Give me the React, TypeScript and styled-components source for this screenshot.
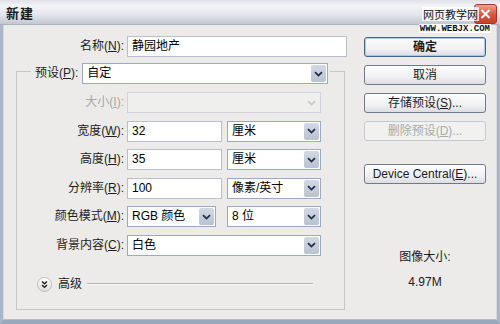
import React from "react"
import styled, { createGlobalStyle } from "styled-components"

const GlobalStyle = createGlobalStyle`
  html, body {
    margin: 0;
    padding: 0;
    background: #ecebe9;
  }
  body {
    font-family: "Liberation Sans", "Noto Sans CJK SC", sans-serif;
    font-size: 12px;
    color: #1c1c1c;
  }
`

const Window = styled.div`
  width: 500px;
  height: 324px;
  display: flex;
  flex-direction: column;
  background: #ecebe9;
  overflow: hidden;
`

const TitleBar = styled.div`
  position: relative;
  height: 25px;
  flex: none;
  display: flex;
  align-items: center;
  padding-left: 6px;
  box-sizing: border-box;
  background: linear-gradient(#dfe1e7 0%, #f4f4f7 25%, #e4e6ec 60%, #c3c7d3 100%);
  border-bottom: 1px solid #a9b1c2;
`

const Title = styled.span`
  font-size: 13px;
  font-weight: bold;
  color: #1a1a1a;
  letter-spacing: 1px;
`

const CloseBtn = styled.div`
  position: absolute;
  right: 3px;
  top: 4px;
  width: 23px;
  height: 20px;
  border-radius: 3px;
  border: 1px solid #9c3b2e;
  box-sizing: border-box;
  background: linear-gradient(#f0a08c, #d9553c 55%, #c84128);
  display: flex;
  align-items: center;
  justify-content: center;
`

const Watermark = styled.div`
  position: absolute;
  right: 9px;
  top: 7px;
  display: flex;
  flex-direction: column;
  align-items: flex-end;
`

const WmTitle = styled.span`
  font-family: "Noto Sans CJK SC", sans-serif;
  font-size: 11px;
  line-height: 14px;
  color: #111;
  padding: 0 1px;
  background: rgba(255, 255, 255, 0.8);
  margin-right: 12px;
`

const WmUrl = styled.span`
  font-family: "Liberation Mono", monospace;
  font-weight: bold;
  font-size: 9px;
  line-height: 8px;
  color: #111;
  background: #fff;
  padding: 1px 1px 0;
  margin-top: 3px;
`

const Frame = styled.div`
  flex: 1;
  display: flex;
  border-left: 3px solid #aab5c7;
  border-right: 3px solid #aab5c7;
  border-bottom: 4px solid #9aa8be;
`

const Body = styled.div`
  flex: 1;
  display: flex;
  padding: 11px 0 0 12px;
  border-left: 1px solid #d8d8d6;
  border-right: 1px solid #d8d8d6;
  border-bottom: 1px solid #bdbdbb;
`

const Main = styled.div`
  width: 332px;
  display: flex;
  flex-direction: column;
`

const NameRow = styled.div`
  display: grid;
  grid-template-columns: 108px 220px;
  column-gap: 3px;
  align-items: center;
  height: 21px;
`

const Label = styled.span<{ $disabled?: boolean }>`
  text-align: right;
  white-space: nowrap;
  line-height: 21px;
  color: ${p => (p.$disabled ? "#a8a8a8" : "#1c1c1c")};
`

const TextBox = styled.div<{ $w: number }>`
  width: ${p => p.$w}px;
  height: 21px;
  box-sizing: border-box;
  border: 1px solid #b6bfcb;
  background: #fff;
  padding-left: 4px;
  line-height: 19px;
  color: #000;
`

const SelectBox = styled.div<{ $w: number; $disabled?: boolean }>`
  width: ${p => p.$w}px;
  height: 21px;
  box-sizing: border-box;
  border: 1px solid ${p => (p.$disabled ? "#cfd3d9" : "#98abc3")};
  background: ${p => (p.$disabled ? "#efefee" : "#fff")};
  display: flex;
  align-items: center;
  color: #000;
`

const SelectValue = styled.span`
  flex: 1;
  padding-left: 4px;
  line-height: 19px;
  white-space: nowrap;
`

const DropBtn = styled.span<{ $disabled?: boolean }>`
  width: 15px;
  height: 17px;
  margin-right: 1px;
  border-radius: 2px;
  background: ${p => (p.$disabled ? "transparent" : "linear-gradient(#d3d9e3, #b9c2d0)")};
  display: flex;
  align-items: center;
  justify-content: center;
`

const Group = styled.fieldset`
  width: 329px;
  box-sizing: border-box;
  margin: 1px 0 0;
  padding: 8px 0 17px;
  border: 1px solid #c6c6c3;
  min-inline-size: 0;
`

const Legend = styled.legend`
  display: flex;
  align-items: center;
  gap: 4px;
  margin-left: 14px;
  padding: 5px 2px 0 4px;
`

const Rows = styled.div`
  display: grid;
  grid-template-columns: 107px 194px;
  column-gap: 3px;
  row-gap: 7.5px;
`

const Pair = styled.div<{ $gap?: number }>`
  display: flex;
  gap: ${p => p.$gap ?? 5}px;
`

const Advanced = styled.div`
  display: flex;
  align-items: center;
  margin-top: 21px;
  padding-left: 20px;
  padding-right: 31px;
  height: 15px;
`

const AdvText = styled.span`
  margin-left: 6px;
  line-height: 15px;
`

const AdvLine = styled.div`
  flex: 1;
  margin-left: 5px;
  height: 0;
  border-top: 1px solid #b4b4b2;
  border-bottom: 1px solid #fafafa;
`

const Side = styled.div`
  width: 122px;
  margin-left: 16px;
  padding-top: 1px;
  display: flex;
  flex-direction: column;
  gap: 8px;
`

const Button = styled.div<{ $default?: boolean; $disabled?: boolean; $gapTop?: number }>`
  height: 20px;
  box-sizing: border-box;
  border-radius: 3px;
  border: 1px solid ${p => (p.$disabled ? "#c5cad2" : p.$default ? "#41688f" : "#6c7a8f")};
  background: ${p => (p.$disabled ? "#f1f1f0" : "linear-gradient(#fefefe, #f1f1f3 60%, #dcdde2)")};
  box-shadow: ${p => (p.$default ? "inset 0 0 0 1px #a9c6e4" : "none")};
  color: ${p => (p.$disabled ? "#a9a9a9" : "#1a1a1a")};
  font-weight: ${p => (p.$default ? "bold" : "normal")};
  text-align: center;
  line-height: 18px;
  margin-top: ${p => p.$gapTop ?? 0}px;
  white-space: nowrap;
`

const SizeInfo = styled.div`
  margin-top: 57px;
  display: flex;
  flex-direction: column;
  align-items: center;
  gap: 9px;
  color: #1a1a1a;
  line-height: 16px;
`

const Chevron = ({ color = "#1f2d4a" }: { color?: string }) => (
  <svg width="9" height="6" viewBox="0 0 9 6">
    <path d="M1 1.2 L4.5 4.6 L8 1.2" fill="none" stroke={color} strokeWidth="1.8" />
  </svg>
)

const Select = ({ w, value, disabled }: { w: number; value?: string; disabled?: boolean }) => (
  <SelectBox $w={w} $disabled={disabled}>
    <SelectValue>{value}</SelectValue>
    <DropBtn $disabled={disabled}>
      <Chevron color={disabled ? "#c9c9c9" : "#1f2d4a"} />
    </DropBtn>
  </SelectBox>
)

const AdvIcon = () => (
  <svg width="15" height="15" viewBox="0 0 15 15">
    <defs>
      <linearGradient id="adv" x1="0" y1="0" x2="0" y2="1">
        <stop offset="0" stopColor="#ffffff" />
        <stop offset="1" stopColor="#dcdcdc" />
      </linearGradient>
    </defs>
    <circle cx="7.5" cy="7.5" r="7" fill="url(#adv)" stroke="#bdbdbd" />
    <path d="M5 4.5 L7.5 6.8 L10 4.5 M5 8 L7.5 10.3 L10 8" fill="none" stroke="#222" strokeWidth="1.4" />
  </svg>
)

export default function App() {
  return (
    <>
      <GlobalStyle />
      <Window>
        <TitleBar>
          <Title>新建</Title>
          <CloseBtn>
            <svg width="11" height="10" viewBox="0 0 11 10">
              <path d="M1.5 1 L9.5 9 M9.5 1 L1.5 9" stroke="#fff" strokeWidth="2" />
            </svg>
          </CloseBtn>
          <Watermark>
            <WmTitle>网页教学网</WmTitle>
            <WmUrl>WWW.WEBJX.COM</WmUrl>
          </Watermark>
        </TitleBar>
        <Frame>
          <Body>
            <Main>
              <NameRow>
                <Label>名称(<u>N</u>):</Label>
                <TextBox $w={220}>静园地产</TextBox>
              </NameRow>
              <Group>
                <Legend>
                  <Label>预设(<u>P</u>):</Label>
                  <Select w={246} value="自定" />
                </Legend>
                <Rows>
                  <Label $disabled>大小(<u>I</u>):</Label>
                  <Select w={194} disabled />
                  <Label>宽度(<u>W</u>):</Label>
                  <Pair>
                    <TextBox $w={95}>32</TextBox>
                    <Select w={94} value="厘米" />
                  </Pair>
                  <Label>高度(<u>H</u>):</Label>
                  <Pair>
                    <TextBox $w={95}>35</TextBox>
                    <Select w={94} value="厘米" />
                  </Pair>
                  <Label>分辨率(<u>R</u>):</Label>
                  <Pair>
                    <TextBox $w={95}>100</TextBox>
                    <Select w={94} value="像素/英寸" />
                  </Pair>
                  <Label>颜色模式(<u>M</u>):</Label>
                  <Pair $gap={11}>
                    <Select w={89} value="RGB 颜色" />
                    <Select w={94} value="8 位" />
                  </Pair>
                  <Label>背景内容(<u>C</u>):</Label>
                  <Select w={194} value="白色" />
                </Rows>
                <Advanced>
                  <AdvIcon />
                  <AdvText>高级</AdvText>
                  <AdvLine />
                </Advanced>
              </Group>
            </Main>
            <Side>
              <Button $default>确定</Button>
              <Button>取消</Button>
              <Button>存储预设(<u>S</u>)...</Button>
              <Button $disabled>删除预设(<u>D</u>)...</Button>
              <Button $gapTop={15}>Device Central(<u>E</u>)...</Button>
              <SizeInfo>
                <span>图像大小:</span>
                <span>4.97M</span>
              </SizeInfo>
            </Side>
          </Body>
        </Frame>
      </Window>
    </>
  )
}
